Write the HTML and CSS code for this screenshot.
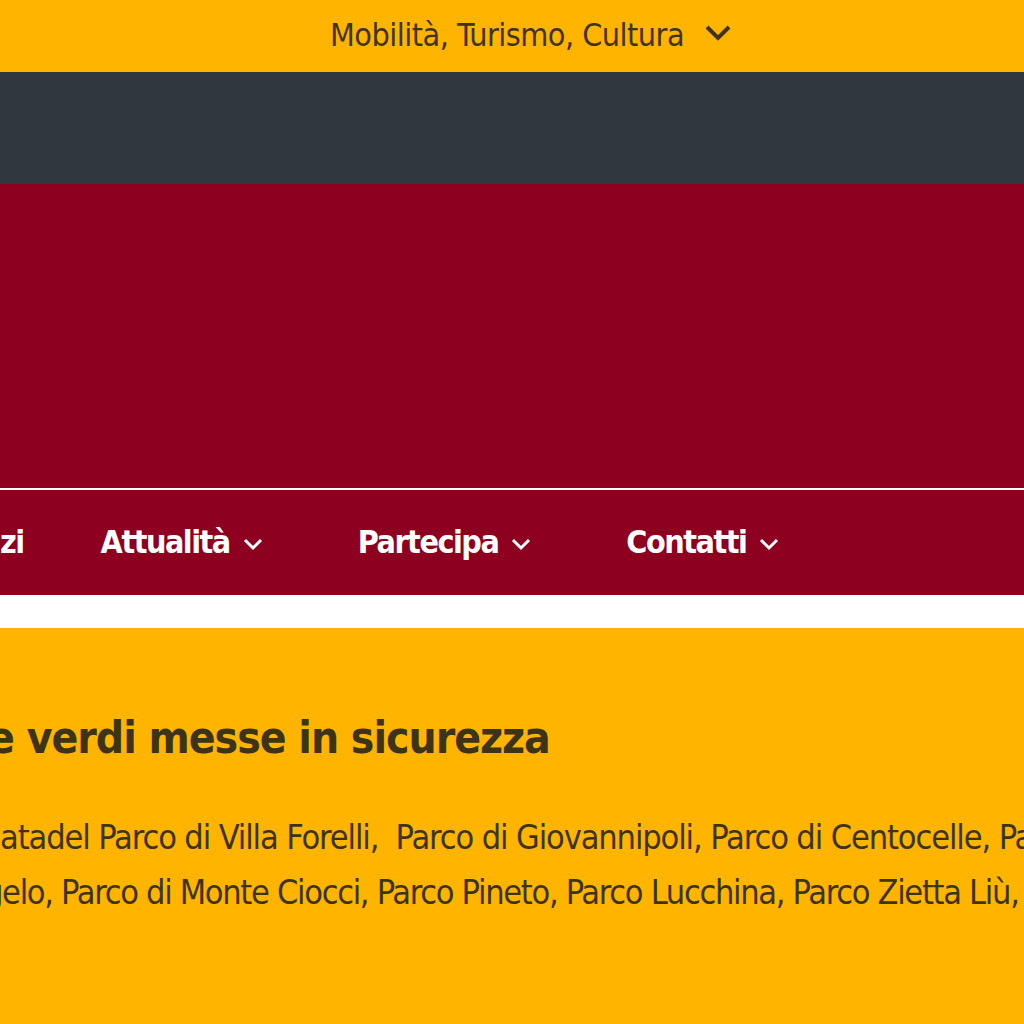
FILE: index.html
```html
<!DOCTYPE html>
<html lang="it">
<head>
    <meta charset="UTF-8">
    <meta name="viewport" content="width=device-width, initial-scale=1.0">
    <title>Roma Capitale</title>
    <link rel="stylesheet" href="styles.css">
</head>
<body>
    <div class="topbar">
        <span class="topbar-label">Mobilità, Turismo, Cultura</span>
        <svg class="topbar-chevron" viewBox="0 0 28 18" width="28" height="18">
            <path d="M3 3 L14 14 L25 3" fill="none" stroke="currentColor" stroke-width="4"/>
        </svg>
    </div>

    <div class="darkbar"></div>

    <header class="header">
        <div class="header-brand"></div>
        <nav class="mainnav">
            <a class="nav-item nav-cut">zi</a>
            <a class="nav-item">Attualità
                <svg class="nav-chevron" viewBox="0 0 22 14" width="22" height="14"><path d="M3 3 L11 11 L19 3" fill="none" stroke="currentColor" stroke-width="3"/></svg>
            </a>
            <a class="nav-item">Partecipa
                <svg class="nav-chevron" viewBox="0 0 22 14" width="22" height="14"><path d="M3 3 L11 11 L19 3" fill="none" stroke="currentColor" stroke-width="3"/></svg>
            </a>
            <a class="nav-item">Contatti
                <svg class="nav-chevron" viewBox="0 0 22 14" width="22" height="14"><path d="M3 3 L11 11 L19 3" fill="none" stroke="currentColor" stroke-width="3"/></svg>
            </a>
        </nav>
    </header>

    <div class="spacer"></div>

    <section class="highlight">
        <h2 class="highlight-title">e verdi messe in sicurezza</h2>
        <p class="highlight-text">atadel Parco di Villa Forelli,&nbsp; Parco di Giovannipoli, Parco di Centocelle, Pa</p>
        <p class="highlight-text shift">gelo, Parco di Monte Ciocci, Parco Pineto, Parco Lucchina, Parco Zietta Liù,</p>
    </section>
</body>
</html>
```

FILE: styles.css
```css
* {
    box-sizing: border-box;
    margin: 0;
    padding: 0;
}

html, body {
    overflow: hidden;
}

body {
    font-family: "DejaVu Sans Condensed", "DejaVu Sans", sans-serif;
    font-stretch: condensed;
    background: #ffffff;
    width: 1024px;
    height: 1024px;
}

.topbar {
    height: 72px;
    background: #ffb400;
    color: #3f3415;
    display: flex;
    align-items: center;
    justify-content: center;
    gap: 20px;
    padding-left: 38px;
}

.topbar-label {
    font-size: 32px;
    letter-spacing: -0.5px;
    margin-top: -2px;
}

.topbar-chevron {
    margin-top: -6px;
}

.darkbar {
    height: 112px;
    background: #30373f;
}

.header {
    background: #8e0020;
    height: 411px;
    display: flex;
    flex-direction: column;
}

.header-brand {
    height: 306px;
    border-bottom: 2px solid #ffffff;
}

.mainnav {
    flex: 1;
    display: flex;
    align-items: center;
    padding-bottom: 2px;
}

.nav-item {
    color: #ffffff;
    font-size: 32px;
    font-weight: bold;
    letter-spacing: -1.5px;
    display: flex;
    align-items: center;
    gap: 12px;
    margin-right: 94px;
}

.nav-cut {
    margin-left: 0;
    margin-right: 77px;
}

.nav-chevron {
    margin-top: 4px;
}

.spacer {
    height: 33px;
}

.highlight {
    background: #ffb400;
    color: #3d3418;
    height: 400px;
    padding-top: 84px;
    white-space: nowrap;
}

.highlight-title {
    font-size: 44px;
    font-weight: bold;
    letter-spacing: -1px;
    margin-left: -12px;
    margin-bottom: 47px;
}

.highlight-text {
    font-size: 34px;
    line-height: 55px;
    letter-spacing: -1.1px;
}

.highlight-text.shift {
    margin-left: -16px;
    letter-spacing: -1.3px;
}
```
